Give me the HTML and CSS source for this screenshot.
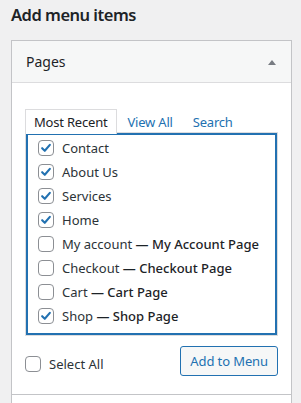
FILE: index.html
```html
<!DOCTYPE html>
<html>
<head>
<meta charset="utf-8">
<link rel="stylesheet" href="styles.css">
</head>
<body>
<div class="wrap">
  <h2 class="title">Add menu items</h2>
  <div class="box">
    <div class="box-head">
      <span class="head-label">Pages</span>
      <span class="arrow"></span>
    </div>
    <div class="box-body">
      <div class="tabs">
        <span class="tab active">Most Recent</span>
        <span class="tab link">View All</span>
        <span class="tab link">Search</span>
      </div>
      <div class="panel">
        <label class="row"><span class="cb checked"><svg viewBox="0 0 16 16"><path d="M3.6 8.2 L6.6 11.2 L12.4 4.4" fill="none" stroke="#2271b1" stroke-width="2.4" stroke-linecap="round" stroke-linejoin="round"/></svg></span><span class="lbl">Contact</span></label>
        <label class="row"><span class="cb checked"><svg viewBox="0 0 16 16"><path d="M3.6 8.2 L6.6 11.2 L12.4 4.4" fill="none" stroke="#2271b1" stroke-width="2.4" stroke-linecap="round" stroke-linejoin="round"/></svg></span><span class="lbl">About Us</span></label>
        <label class="row"><span class="cb checked"><svg viewBox="0 0 16 16"><path d="M3.6 8.2 L6.6 11.2 L12.4 4.4" fill="none" stroke="#2271b1" stroke-width="2.4" stroke-linecap="round" stroke-linejoin="round"/></svg></span><span class="lbl">Services</span></label>
        <label class="row"><span class="cb checked"><svg viewBox="0 0 16 16"><path d="M3.6 8.2 L6.6 11.2 L12.4 4.4" fill="none" stroke="#2271b1" stroke-width="2.4" stroke-linecap="round" stroke-linejoin="round"/></svg></span><span class="lbl">Home</span></label>
        <label class="row"><span class="cb"></span><span class="lbl">My account <span class="state">— My Account Page</span></span></label>
        <label class="row"><span class="cb"></span><span class="lbl">Checkout <span class="state">— Checkout Page</span></span></label>
        <label class="row"><span class="cb"></span><span class="lbl">Cart <span class="state">— Cart Page</span></span></label>
        <label class="row"><span class="cb checked"><svg viewBox="0 0 16 16"><path d="M3.6 8.2 L6.6 11.2 L12.4 4.4" fill="none" stroke="#2271b1" stroke-width="2.4" stroke-linecap="round" stroke-linejoin="round"/></svg></span><span class="lbl">Shop <span class="state">— Shop Page</span></span></label>
      </div>
      <div class="actions">
        <label class="select-all"><span class="cb"></span><span class="lbl">Select All</span></label>
        <span class="button">Add to Menu</span>
      </div>
    </div>
  </div>
  <div class="next-section"></div>
</div>
</body>
</html>
```
FILE: styles.css
```css
html, body {
  margin: 0;
  padding: 0;
  background: #f0f0f1;
  font-family: "Noto Sans", "Open Sans", sans-serif;
  color: #2c3338;
}
.wrap {
  padding: 0 9px 0 11px;
}
.title {
  margin: 0;
  height: 40px;
  box-sizing: border-box;
  padding-top: 3px;
  font-size: 16.5px;
  font-weight: 600;
  line-height: 24px;
  color: #1d2327;
  letter-spacing: -0.5px;
}
.box {
  border: 1px solid #c3c4c7;
  border-bottom: none;
  background: #fff;
}
.box-head {
  height: 42px;
  box-sizing: border-box;
  background: #f6f7f7;
  border-bottom: 1px solid #dcdcde;
  display: flex;
  align-items: center;
  justify-content: space-between;
  padding: 1px 15px 0 14px;
}
.head-label {
  font-size: 14px;
  color: #1d2327;
  line-height: 20px;
}
.arrow {
  width: 0;
  height: 0;
  border-left: 4px solid transparent;
  border-right: 4px solid transparent;
  border-bottom: 5px solid #787c82;
}
.box-body {
  padding: 26px 13px 18px 13px;
}
.tabs {
  display: flex;
  height: 25px;
  position: relative;
  z-index: 1;
  margin-bottom: -1px;
}
.tab {
  font-size: 13px;
  line-height: 24px;
  box-sizing: border-box;
  height: 25px;
  border: 1px solid transparent;
  border-bottom: none;
  letter-spacing: -0.2px;
}
.tab.active {
  background: #fff;
  border-color: #dcdcde;
  color: #1d2327;
  padding: 0 9px 0 8px;
}
.tab.link {
  color: #2271b1;
  padding: 0 9px;
}
.panel {
  border: 2px solid #2271b1;
  margin-left: 1px;
  width: 251px;
  box-sizing: border-box;
  padding: 1px 0 5px 10px;
  box-shadow: 0 0 0 1px #dcdcde;
}
.row {
  display: flex;
  align-items: center;
  height: 24px;
}
.cb {
  width: 16px;
  height: 16px;
  box-sizing: border-box;
  border: 1px solid #8c8f94;
  border-radius: 4px;
  background: #fff;
  flex: none;
  display: flex;
  align-items: center;
  justify-content: center;
}
.cb svg {
  width: 16px;
  height: 16px;
  display: block;
}
.lbl {
  margin-left: 8px;
  font-size: 13px;
  line-height: 20px;
  color: #2c3338;
  white-space: nowrap;
}
.state {
  font-weight: 500;
  color: #1d2327;
}
.actions {
  display: flex;
  justify-content: space-between;
  align-items: center;
  margin-top: 11px;
  width: 253px;
}
.select-all {
  display: flex;
  align-items: center;
  margin-top: 5px;
}
.button {
  height: 30px;
  box-sizing: border-box;
  border: 1px solid #2271b1;
  border-radius: 3px;
  background: #f6f7f7;
  color: #2271b1;
  font-size: 13px;
  line-height: 28px;
  padding: 0 9px;
  letter-spacing: -0.1px;
}
.next-section {
  border: 1px solid #c3c4c7;
  border-bottom: none;
  height: 10px;
  background: #fff;
}
```
